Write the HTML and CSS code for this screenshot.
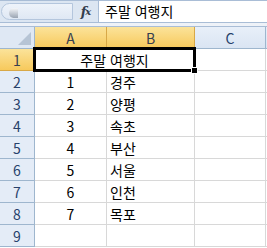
FILE: index.html
```html
<!doctype html>
<html lang="ko">
<head>
<meta charset="utf-8">
<title>주말 여행지</title>
<link rel="stylesheet" href="styles.css">
</head>
<body>
<div class="topbar">
  <div class="namebox"><span class="knob"></span></div>
  <div class="fx"><i>f</i><i class="x">x</i></div>
  <div class="formula">주말 여행지</div>
</div>
<div class="gap"></div>
<div class="sheet">
  <div class="hd corner"><span class="tri"></span></div>
  <div class="hd col sel">A</div>
  <div class="hd col sel">B</div>
  <div class="hd col">C</div>
  <div class="hd col rest"></div>

  <div class="hd row sel">1</div>
  <div class="cell merged">주말 여행지<span class="pick"><span class="handle"></span></span></div>
  <div class="cell"></div>
  <div class="cell rest"></div>

  <div class="hd row">2</div><div class="cell num">1</div><div class="cell">경주</div><div class="cell"></div><div class="cell rest"></div>
  <div class="hd row">3</div><div class="cell num">2</div><div class="cell">양평</div><div class="cell"></div><div class="cell rest"></div>
  <div class="hd row">4</div><div class="cell num">3</div><div class="cell">속초</div><div class="cell"></div><div class="cell rest"></div>
  <div class="hd row">5</div><div class="cell num">4</div><div class="cell">부산</div><div class="cell"></div><div class="cell rest"></div>
  <div class="hd row">6</div><div class="cell num">5</div><div class="cell">서울</div><div class="cell"></div><div class="cell rest"></div>
  <div class="hd row">7</div><div class="cell num">6</div><div class="cell">인천</div><div class="cell"></div><div class="cell rest"></div>
  <div class="hd row">8</div><div class="cell num">7</div><div class="cell">목포</div><div class="cell"></div><div class="cell rest"></div>
  <div class="hd row">9</div><div class="cell num"></div><div class="cell"></div><div class="cell"></div><div class="cell rest"></div>
</div>
</body>
</html>
```
FILE: styles.css
```css
html, body { margin: 0; padding: 0; background: #fff; overflow: hidden; }
body { font-family: "Noto Sans CJK KR", "Noto Sans", sans-serif; font-size: 14px; color: #000; width: 267px; }

.topbar { display: flex; box-sizing: border-box; height: 23px; background: #dce6f2; border-top: 1px solid #a9bdd6; border-bottom: 1px solid #a9bdd6; }
.namebox { width: 70px; margin: 2px 0 2px 1px; border: 1px solid #b4c6dd; border-radius: 9px 0 0 9px; background: linear-gradient(#eef3fa, #dfe8f4); position: relative; }
.knob { position: absolute; left: 7px; top: 4px; width: 9px; height: 10px; border-radius: 50% 0 0 50%; background: linear-gradient(#f4f6f9, #9aa4b2); }
.fx { width: 25px; display: flex; align-items: center; justify-content: center; font-family: "DejaVu Serif", serif; font-weight: bold; font-style: italic; font-size: 13px; color: #333d4c; letter-spacing: -1px; }
.fx .x { font-size: 10px; }
.formula { flex: 1; background: #fff; border-left: 1px solid #a9bdd6; padding-left: 6px; line-height: 21px; font-size: 14px; }

.gap { height: 3px; background: #eef2f8; border-bottom: 1px solid #a9bdd6; }

.sheet { display: grid; grid-template-columns: 35px 72px 88px 71px 1fr; grid-template-rows: repeat(10, 22px); }
.hd { box-sizing: border-box; background: #e4ecf7; color: #27416b; display: flex; align-items: center; justify-content: center; border-right: 1px solid #9eb6ce; border-bottom: 1px solid #9eb6ce; font-size: 14px; }
.hd.col { background: linear-gradient(#e8eff9, #dae5f3); }
.hd.sel { background: linear-gradient(#fbe39a, #f7c95c); border-color: #d8a847; color: #38404f; }
.hd.row.sel { border-right-color: #9eb6ce; }
.corner { position: relative; background: #dfe8f4; }
.tri { position: absolute; right: 3px; bottom: 3px; width: 0; height: 0; border-left: 13px solid transparent; border-bottom: 13px solid #b6c4d5; }

.cell { box-sizing: border-box; border-right: 1px solid #d8d8d8; border-bottom: 1px solid #d8d8d8; display: flex; align-items: center; padding-left: 3px; line-height: 1; }
.cell.num { justify-content: center; padding: 0; }
.rest { border-right: none; }
.merged { grid-column: span 2; justify-content: center; position: relative; padding: 0; }
.pick { position: absolute; left: -2px; top: -2px; right: -2px; bottom: -2px; border: 3px solid #000; }
.handle { position: absolute; right: -5px; bottom: -5px; width: 5px; height: 5px; background: #000; border: 1px solid #fff; }
```
